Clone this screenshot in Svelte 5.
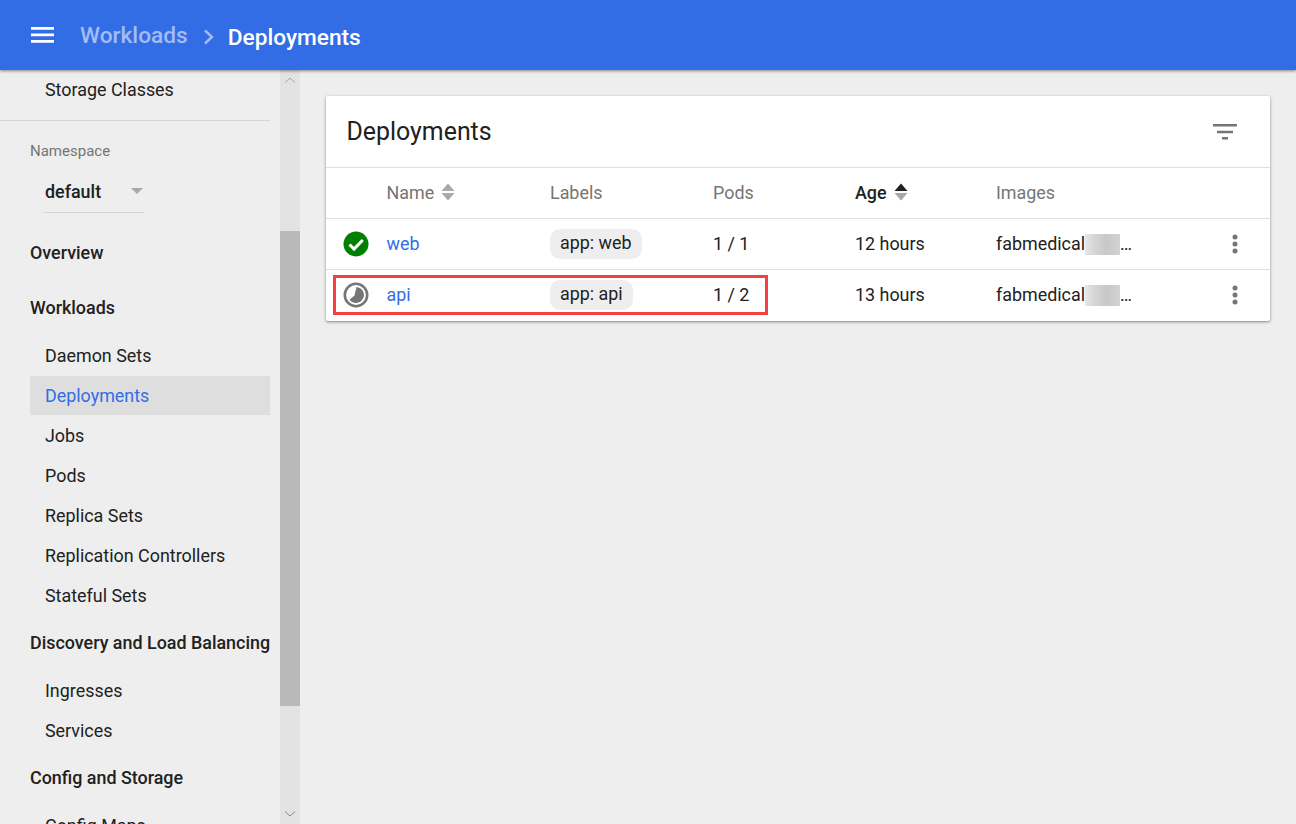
<script>
  const workloads = ['Daemon Sets', 'Deployments', 'Jobs', 'Pods', 'Replica Sets', 'Replication Controllers', 'Stateful Sets'];
  const rows = [
    { name: 'web', label: 'app: web', pods: '1 / 1', age: '12 hours', ok: true },
    { name: 'api', label: 'app: api', pods: '1 / 2', age: '13 hours', ok: false }
  ];
</script>

<div class="page">
  <header class="topbar">
    <svg class="menu" width="24" height="24" viewBox="0 0 24 24"><path d="M1 4h23v2.8H1zM1 10.4h23v2.8H1zM1 16.9h23v2.8H1z" fill="#fff"/></svg>
    <span class="crumb">Workloads</span>
    <svg class="chev" width="14" height="18" viewBox="0 0 14 18"><path d="M3 2.5 10 9l-7 6.5" fill="none" stroke="#a3bcf5" stroke-width="2.4"/></svg>
    <span class="title">Deployments</span>
  </header>

  <div class="body">
    <aside class="side">
      <nav class="nav">
        <div class="item first">Storage Classes</div>
        <div class="rule"></div>
        <div class="ns-label">Namespace</div>
        <div class="ns-select"><span>default</span><i class="caret"></i></div>
        <div class="group overview">Overview</div>
        <div class="group workloads">Workloads</div>
        {#each workloads as w}
          <div class="item" class:active={w === 'Deployments'}>{w}</div>
        {/each}
        <div class="group disc">Discovery and Load Balancing</div>
        <div class="item">Ingresses</div>
        <div class="item">Services</div>
        <div class="group conf">Config and Storage</div>
        <div class="item">Config Maps</div>
      </nav>
      <div class="track">
        <svg class="arrow" width="14" height="8" viewBox="0 0 14 8"><path d="M2 6.5 7 2l5 4.5" fill="none" stroke="#a8a8a8" stroke-width="1"/></svg>
        <div class="thumb"></div>
        <svg class="arrow down" width="14" height="8" viewBox="0 0 14 8"><path d="M2 1.5 7 6l5-4.5" fill="none" stroke="#8a8a8a" stroke-width="1"/></svg>
      </div>
    </aside>

    <main class="main">
      <section class="card">
        <div class="card-head">
          <h1>Deployments</h1>
          <svg width="24" height="16" viewBox="0 0 24 16"><path d="M0 0h24v2.4H0zM4 6.8h16v2.4H4zM9 13h6v2.4H9z" fill="#757575"/></svg>
        </div>
        <div class="row head">
          <div class="c-icon"></div>
          <div class="c-name">Name <svg class="sort" width="14" height="18" viewBox="0 0 14 18"><path d="M7 0.5 13.5 8H.5z" fill="#a8a8a8"/><path d="M7 17.5.5 10h13z" fill="#a8a8a8"/></svg></div>
          <div class="c-label">Labels</div>
          <div class="c-pods">Pods</div>
          <div class="c-age strong">Age <svg class="sort" width="14" height="18" viewBox="0 0 14 18"><path d="M7 0.5 13.5 8H.5z" fill="#212121"/><path d="M7 17.5.5 10h13z" fill="#a8a8a8"/></svg></div>
          <div class="c-img">Images</div>
        </div>
        {#each rows as r}
          <div class="row data">
            <div class="c-icon">
              {#if r.ok}
                <svg width="26" height="26" viewBox="0 0 26 26"><circle cx="13" cy="13" r="12.5" fill="#008000"/><path d="M6.5 13.5 11 18l8.8-9" fill="none" stroke="#fff" stroke-width="3"/></svg>
              {:else}
                <svg width="26" height="26" viewBox="0 0 26 26"><circle cx="13" cy="13" r="11.2" fill="none" stroke="#757575" stroke-width="2.6"/><path d="M13.5 5A8 8 0 1 1 6.5 17.7L11.5 13.5z" fill="#757575"/></svg>
              {/if}
            </div>
            <div class="c-name link">{r.name}</div>
            <div class="c-label chipcell"><span class="chip">{r.label}</span></div>
            <div class="c-pods">{r.pods}</div>
            <div class="c-age">{r.age}</div>
            <div class="c-img"><span>fabmedical</span><span class="blur"></span><span>…</span></div>
            <div class="c-more"><svg width="6" height="20" viewBox="0 0 6 20"><circle cx="3" cy="3" r="2.5" fill="#757575"/><circle cx="3" cy="10" r="2.5" fill="#757575"/><circle cx="3" cy="17" r="2.5" fill="#757575"/></svg></div>
            {#if !r.ok}<div class="callout"></div>{/if}
          </div>
        {/each}
      </section>
    </main>
  </div>
</div>

<style>
  :global(body) { margin: 0; background: #eeeeee; }
  .page { height: 824px; display: flex; flex-direction: column; overflow: hidden; font-family: Roboto, "Liberation Sans", sans-serif; color: #212121; font-size: 17.9px; }
  .topbar { height: 70px; flex: none; background: #326de6; display: flex; align-items: center; box-shadow: 0 1px 3px rgba(0,0,0,.45); position: relative; z-index: 2; color: #fff; font-size: 22.7px; font-weight: 500; }
  .menu { margin-left: 30px; }
  .crumb { margin-left: 26px; color: #a3bcf5; }
  .chev { margin-left: 14px; position: relative; top: 2px; }
  .title { margin-left: 12px; position: relative; top: 2px; }
  .body { flex: 1; display: flex; min-height: 0; }
  .side { width: 300px; flex: none; display: flex; overflow: hidden; }
  .nav { width: 280px; flex: none; }
  .item { height: 40px; line-height: 40px; width: 240px; padding-left: 15px; margin-left: 30px; box-sizing: border-box; white-space: nowrap; color: #212121; }
  .item.first { height: 30px; line-height: 40px; margin-top: 0; }
  .item.active { background: #dedede; color: #326de6; height: 39px; margin-bottom: 1px; line-height: 40px; }
  .rule { width: 270px; height: 1px; background: #d6d6d6; margin-top: 20px; }
  .ns-label { margin: 21px 0 0 30px; font-size: 15px; line-height: 18px; color: #757575; }
  .ns-select { margin: 20px 0 0 43px; padding: 0 0 0 2px; width: 101px; height: 33px; box-sizing: border-box; border-bottom: 1px solid #d6d6d6; display: flex; justify-content: space-between; align-items: flex-start; font-weight: 500; line-height: 23px; }
  .ns-select span { display: block; }
  .caret { width: 0; height: 0; border: 6px solid transparent; border-top: 6px solid #a8a8a8; border-bottom: 0; margin: 8px 1px 0 0; }
  .group { margin-left: 30px; font-weight: 500; line-height: 24px; white-space: nowrap; }
  .overview { margin-top: 28px; }
  .workloads { margin-top: 31px; margin-bottom: 16px; }
  .disc { margin-top: 15px; margin-bottom: 16px; }
  .conf { margin-top: 15px; margin-bottom: 16px; }
  .track { width: 20px; flex: none; background: #e3e3e3; display: flex; flex-direction: column; align-items: center; height: 754px; position: relative; }
  .arrow { position: absolute; top: 6px; }
  .arrow.down { top: auto; bottom: 6px; }
  .thumb { width: 20px; height: 475px; background: #b9b9b9; margin-top: 161px; }
  .main { flex: 1; padding: 26px 26px 0 26px; min-width: 0; }
  .card { background: #fff; border-radius: 2px; box-shadow: 0 1px 3px rgba(0,0,0,.45); padding-bottom: 1px; }
  .card-head { height: 71px; display: flex; align-items: center; justify-content: space-between; padding: 0 33px 0 20.5px; }
  h1 { margin: 0; font-size: 24.9px; font-weight: 400; color: #212121; }
  .row { position: relative; display: flex; align-items: center; border-top: 1px solid #e0e0e0; box-sizing: border-box; }
  .head { height: 51px; color: #757575; }
  .data { height: 51px; }
  .c-icon { width: 60.5px; flex: none; padding-left: 17px; box-sizing: border-box; display: flex; }
  .c-name { width: 163.5px; flex: none; display: flex; align-items: center; gap: 7px; padding-bottom: 2px; box-sizing: border-box; }
  .link { color: #326de6; }
  .c-label { width: 163px; flex: none; padding-bottom: 2px; box-sizing: border-box; }
  .chipcell { padding-bottom: 0; }
  .c-pods { width: 142px; flex: none; padding-bottom: 2px; box-sizing: border-box; }
  .c-age { width: 141px; flex: none; display: flex; align-items: center; gap: 7px; padding-bottom: 2px; box-sizing: border-box; }
  .strong { color: #212121; font-weight: 500; }
  .c-img { width: 196px; flex: none; display: flex; align-items: center; padding-bottom: 2px; box-sizing: border-box; }
  .c-more { width: 6px; flex: none; margin-left: 40px; display: flex; }
  .chip { display: inline-block; background: #eeeeee; border-radius: 10px; padding: 0 10px; height: 30px; line-height: 28px; }
  .blur { width: 35px; height: 21px; background: linear-gradient(90deg, #e6e6e6, #d4d4d4 30%, #c8c8c8 60%, #d2d2d2); margin-top: 2px; }
  .callout { position: absolute; left: 7px; top: 5px; width: 435px; height: 40px; border: 3px solid #f44040; box-sizing: border-box; pointer-events: none; }
</style>
